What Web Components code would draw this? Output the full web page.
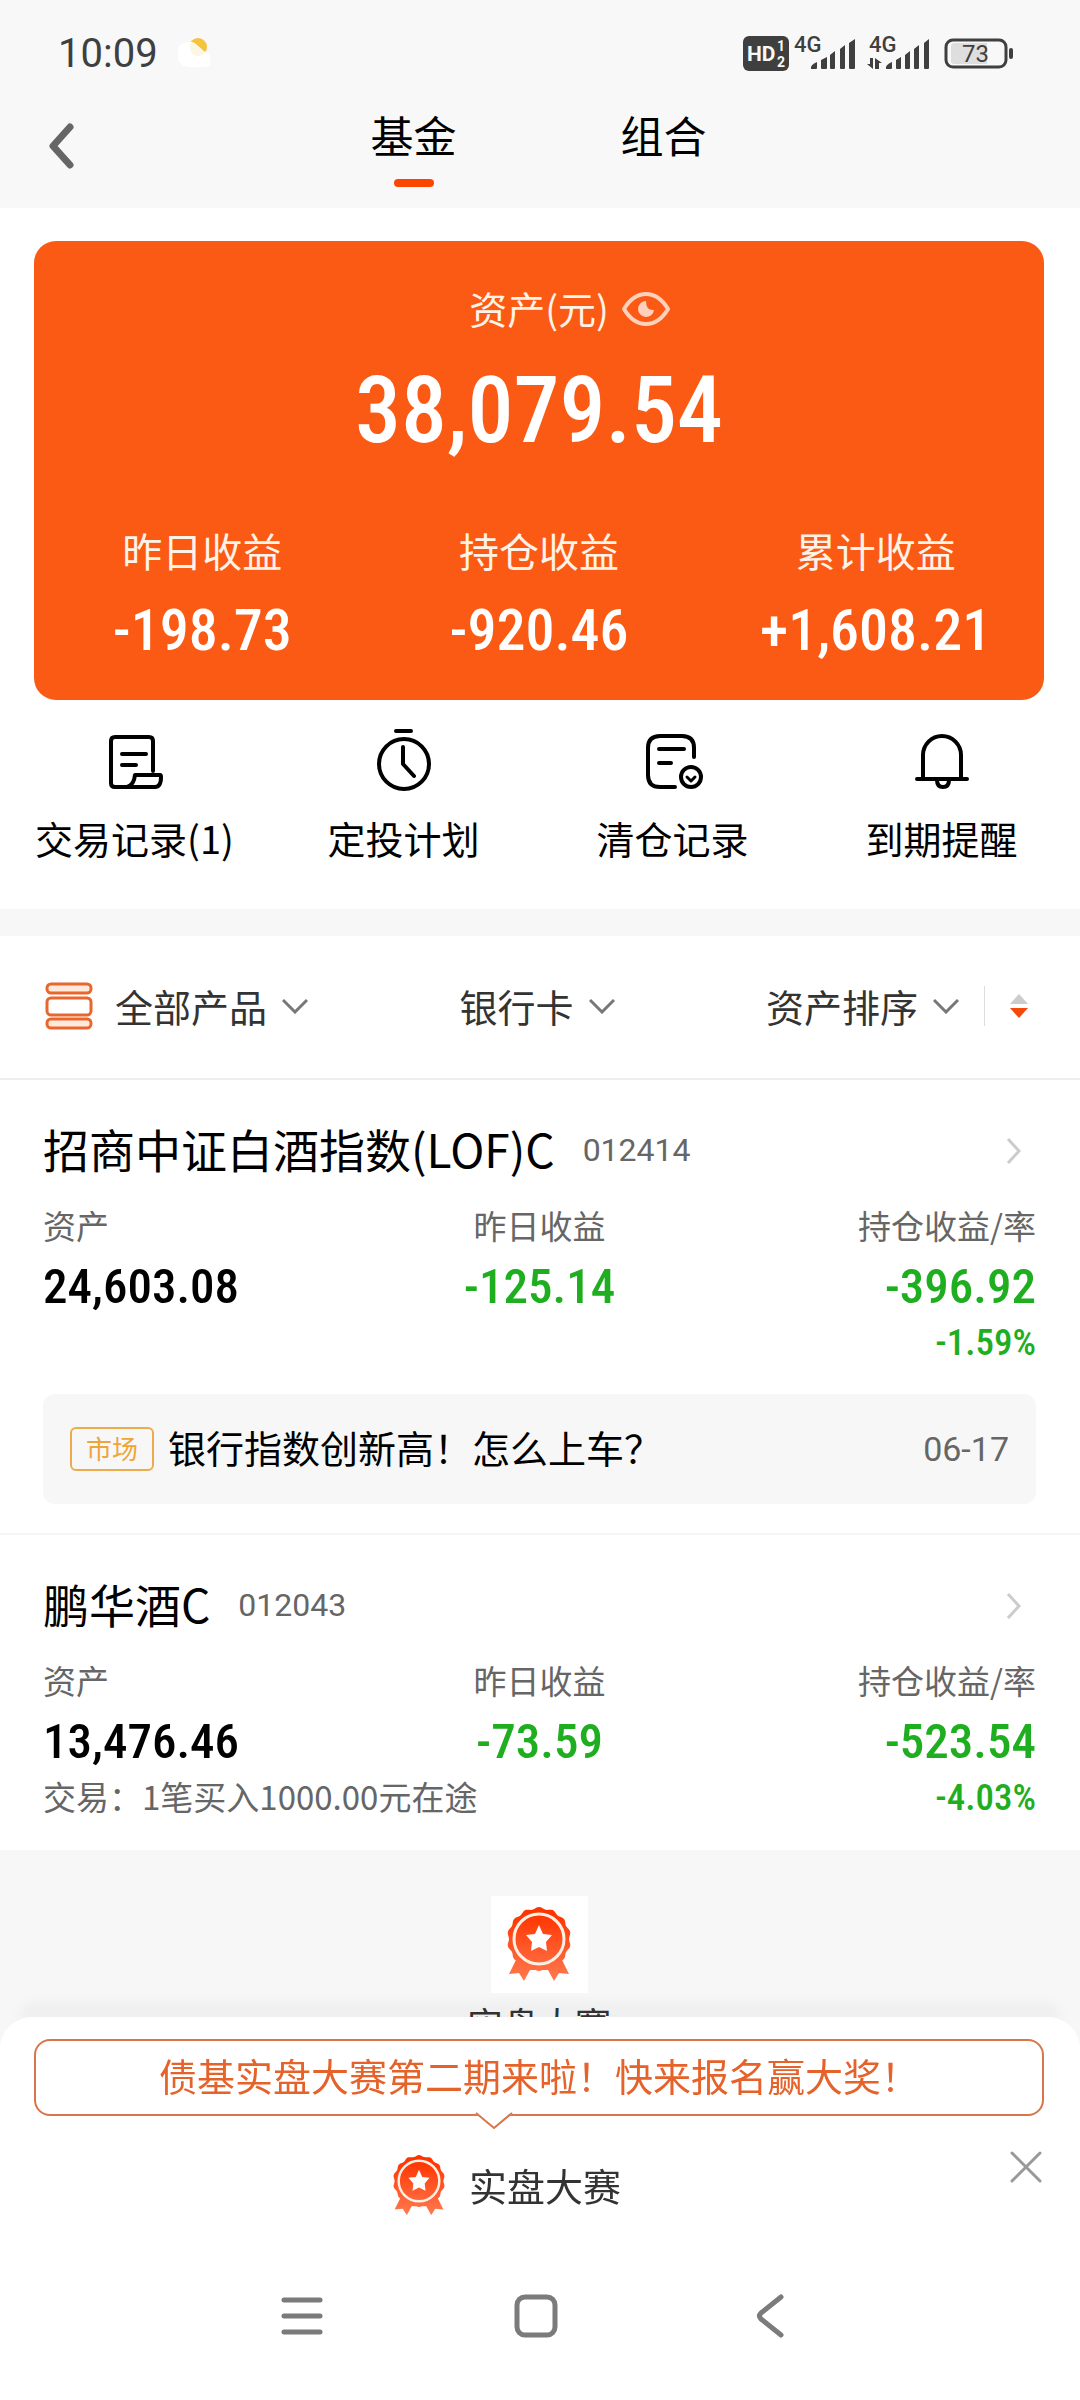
<!DOCTYPE html>
<html lang="zh-CN">
<head>
<meta charset="utf-8">
<meta name="viewport" content="width=device-width, initial-scale=1">
<title>基金</title>
<style>
  :root {
    --orange: #fb5a15;
    --red: #fb4602;
    --green: #1fae1f;
    --muted: #666;
    --page: #f7f7f7;
    --num: "Roboto Condensed", "Liberation Sans Narrow", Roboto, sans-serif;
  }
  body {
    margin: 0;
    min-height: 100vh;
    background: var(--page);
    color: #000;
    font-family: "Noto Sans CJK SC", sans-serif;
  }
</style>
</head>
<body>
<fund-page></fund-page>

<script>
  class StatusBar extends HTMLElement {
    constructor() {
      super();
      this.attachShadow({ mode: 'open' });
      this.shadowRoot.innerHTML = `
        <style>
          :host {
            display: flex;
            align-items: center;
            justify-content: space-between;
            height: 106px;
            padding: 0 66px 0 58px;
            color: #3f3f3f;
            font-family: Roboto, sans-serif;
          }
          div { display: flex; align-items: center; }
          .left { gap: 20px; }
          time { font-size: 40px; line-height: 48px; padding-top: 2px; }
          .right { gap: 5px; }
          .second { margin-left: 5px; }
          .battery { margin-left: 9px; }
          svg { display: block; }
          text { font-family: Roboto, sans-serif; }
        </style>
        <div class="left">
          <time>10:09</time>
          <svg width="32" height="30" viewBox="0 0 32 30">
            <circle cx="20" cy="9" r="9" fill="#f7c23c"/>
            <path d="M10 4a10 10 0 0 1 9 3l9 8a7 7 0 0 1-4 14H12A12 12 0 0 1 10 4z" fill="#fff"/>
            <path d="M12 5q4 0 7 3l8 7q-5 5-11 2-5-4-4-12z" fill="#fdf6e2"/>
          </svg>
        </div>
        <div class="right">
          <svg width="46" height="35" viewBox="0 0 46 35">
            <rect width="46" height="35" rx="6" fill="#3f3f3f"/>
            <text x="4" y="25" font-size="21" font-weight="700" fill="#f8f8f8">HD</text>
            <text x="34" y="15" font-size="14" font-weight="700" fill="#f8f8f8">1</text>
            <text x="34" y="31" font-size="14" font-weight="700" fill="#f8f8f8">2</text>
          </svg>
          <svg width="62" height="45" viewBox="0 -5 62 45" fill="#3f3f3f">
            <text x="0" y="16" font-size="22" font-weight="500">4G</text>
            <path d="M17 33q-1-4 6-7v6q0 1-1 1zM27 24l6-3v11q0 1-1 1h-4q-1 0-1-1zM36 19l5-4v17q0 1-1 1h-3q-1 0-1-1zM46 13l5-4v23q0 1-1 1h-3q-1 0-1-1zM55 7l6-4v29q0 1-1 1h-4q-1 0-1-1z"/>
          </svg>
          <svg class="second" width="64" height="45" viewBox="0 -5 64 45" fill="#3f3f3f">
            <text x="3" y="16" font-size="22" font-weight="500">4G</text>
            <path d="M20 33q-1-4 6-7v6q0 1-1 1zM30 24l5-3v11q0 1-1 1h-3q-1 0-1-1zM39 19l5-4v17q0 1-1 1h-3q-1 0-1-1zM48 13l5-4v23q0 1-1 1h-3q-1 0-1-1zM58 7l5-4v29q0 1-1 1h-3q-1 0-1-1z"/>
            <path d="M4 22h3v11l-6-5h3zM9 33V22l7 5h-3v6z"/>
          </svg>
          <svg class="battery" width="70" height="31" viewBox="0 0 70 31">
            <rect x="2" y="2" width="60" height="27" rx="7" fill="none" stroke="#3f3f3f" stroke-width="3"/>
            <path d="M10 5h33v21H10q-3 0-3-3V8q0-3 3-3z" fill="#dedede"/>
            <rect x="65" y="10" width="4" height="11" rx="2" fill="#3f3f3f"/>
            <text x="18" y="24" font-size="24" fill="#3f3f3f">73</text>
          </svg>
        </div>
      `;
    }
  }

  class PageHeader extends HTMLElement {
    constructor() {
      super();
      this.attachShadow({ mode: 'open' });
      this.shadowRoot.innerHTML = `
        <style>
          :host {
            display: grid;
            grid-template-columns: 1fr auto 1fr;
            align-items: start;
          }
          button {
            padding: 0;
            border: 0;
            background: none;
            color: inherit;
            font: inherit;
          }
          .back {
            display: flex;
            align-items: center;
            width: 100px;
            height: 80px;
            padding-left: 48px;
          }
          nav { display: grid; grid-template-columns: 250px 250px; padding-right: 3px; }
          .tab { font-size: 43px; line-height: 56px; padding-bottom: 21px; }
          .tab::after {
            content: "";
            display: block;
            width: 40px;
            height: 8px;
            margin: 17px auto 0;
            border-radius: 4px;
          }
          .tab[aria-current]::after { background: var(--red); }
        </style>
        <button class="back" aria-label="返回">
          <svg width="28" height="46" viewBox="0 0 28 46" fill="none" stroke="#666" stroke-width="7" stroke-linecap="round" stroke-linejoin="round">
            <path d="M22 4L5 23l17 19"/>
          </svg>
        </button>
        <nav>
          <button class="tab" aria-current="page">基金</button>
          <button class="tab">组合</button>
        </nav>
      `;
    }
  }

  class StatItem extends HTMLElement {
    constructor() {
      super();
      this.attachShadow({ mode: 'open' });
      this.shadowRoot.innerHTML = `
        <style>
          :host { display: block; text-align: center; }
          .label { font-size: 40px; line-height: 48px; color: #fff2e6; }
          .value {
            margin-top: 26px;
            font: 500 58px/60px var(--num);
          }
        </style>
        <div class="label"><slot name="label"></slot></div>
        <div class="value"><slot></slot></div>
      `;
    }
  }

  class AssetCard extends HTMLElement {
    constructor() {
      super();
      this.attachShadow({ mode: 'open' });
      this.shadowRoot.innerHTML = `
        <style>
          :host {
            display: block;
            padding: 41px 0 40px;
            border-radius: 22px;
            background: var(--orange);
            color: #fff;
          }
          .title {
            display: grid;
            grid-template-columns: 1fr auto 1fr;
            align-items: center;
            column-gap: 13px;
            font-size: 38px;
            line-height: 52px;
            color: #fff2e6;
          }
          .title span { grid-column: 2; }
          button {
            justify-self: start;
            padding: 2px 0 0;
            border: 0;
            background: none;
          }
          svg { display: block; }
          .total {
            margin-top: 29px;
            text-align: center;
            font: 500 92px/96px var(--num);
          }
          .stats {
            display: grid;
            grid-template-columns: repeat(3, 1fr);
            margin-top: 67px;
          }
        </style>
        <div class="title">
          <span>资产(元)</span>
          <button aria-label="隐藏金额">
            <svg width="48" height="36" viewBox="0 0 48 36">
              <path d="M2 18C8 8 15 3 24 3s16 5 22 15c-6 10-13 15-22 15S8 28 2 18z" fill="none" stroke="#ffd0bb" stroke-width="4" stroke-linejoin="round"/>
              <path d="M24 10a8 8 0 1 0 8 9q-8 1-8-9z" fill="#ffd0bb"/>
            </svg>
          </button>
        </div>
        <div class="total">38,079.54</div>
        <div class="stats">
          <stat-item><span slot="label">昨日收益</span>-198.73</stat-item>
          <stat-item><span slot="label">持仓收益</span>-920.46</stat-item>
          <stat-item><span slot="label">累计收益</span>+1,608.21</stat-item>
        </div>
      `;
    }
  }

  const ACTION_ICONS = {
    records: `
      <path d="M50 43V13q0-4-4-4H12q-4 0-4 4v42q0 4 4 4h40q6 0 6-10 0-2-1-2H32q-1 10-8 12"/>
      <path d="M19 26h24M19 37h14"/>`,
    plan: `
      <circle cx="32" cy="36" r="25"/>
      <path d="M24 3h15M31 19v17l11 12"/>`,
    cleared: `
      <path d="M53 29V20Q53 8 41 8H19Q7 8 7 20v27q0 12 12 12h15"/>
      <path d="M18 21h25M18 35h12"/>
      <circle cx="50" cy="49" r="10"/>
      <path d="M46 49l4 4 4-4" stroke-width="3"/>`,
    remind: `
      <path d="M13 50V27a19 19 0 0 1 38 0v23M7 51h50"/>
      <path d="M27 52q0 7 6 7t6-7"/>`
  };

  class ActionItem extends HTMLElement {
    constructor() {
      super();
      this.attachShadow({ mode: 'open' });
      this.shadowRoot.innerHTML = `
        <style>
          :host { display: block; }
          a {
            display: flex;
            flex-direction: column;
            align-items: center;
            gap: 22px;
            color: #000;
            font-size: 38px;
            line-height: 48px;
            text-decoration: none;
            white-space: nowrap;
          }
        </style>
        <a href="#">
          <svg width="64" height="64" viewBox="0 0 64 64" fill="none" stroke="#000" stroke-width="4" stroke-linecap="round" stroke-linejoin="round"></svg>
          <slot></slot>
        </a>
      `;
    }

    connectedCallback() {
      this.shadowRoot.querySelector('svg').innerHTML = ACTION_ICONS[this.getAttribute('icon')];
    }
  }

  class FilterSelect extends HTMLElement {
    constructor() {
      super();
      this.attachShadow({ mode: 'open' });
      this.shadowRoot.innerHTML = `
        <style>
          :host { display: block; }
          label { display: flex; align-items: center; gap: 14px; }
          select {
            appearance: none;
            margin: 0;
            padding: 0;
            border: 0;
            background: none;
            color: #333;
            font: inherit;
            font-size: 38px;
            line-height: 52px;
          }
          svg { display: block; }
        </style>
        <label>
          <select></select>
          <svg width="26" height="16" viewBox="0 0 26 16" fill="none" stroke="#777" stroke-width="3">
            <path d="M1 2l12 12L25 2"/>
          </svg>
        </label>
      `;
    }

    connectedCallback() {
      const select = this.shadowRoot.querySelector('select');
      select.setAttribute('aria-label', this.getAttribute('label'));
      select.add(new Option(this.getAttribute('label')));
    }
  }

  class FilterBar extends HTMLElement {
    constructor() {
      super();
      this.attachShadow({ mode: 'open' });
      this.shadowRoot.innerHTML = `
        <style>
          :host {
            display: flex;
            align-items: center;
            justify-content: space-between;
            height: 140px;
            padding: 0 52px 2px 45px;
            border-bottom: 2px solid #eee;
            background: #fff;
          }
          div { display: flex; align-items: center; }
          .products { gap: 22px; }
          .line { width: 1px; height: 40px; margin: 0 25px; background: #ddd; }
          button { padding: 0; border: 0; background: none; }
          svg { display: block; }
        </style>
        <div class="products">
          <svg width="48" height="48" viewBox="0 0 48 48" fill="#ffe9dc" stroke="#e8672f" stroke-width="3">
            <rect x="2" y="2" width="44" height="9" rx="4"/>
            <rect x="2" y="16" width="44" height="17" rx="4" fill="#fff"/>
            <rect x="2" y="37" width="44" height="9" rx="4"/>
          </svg>
          <filter-select label="全部产品"></filter-select>
        </div>
        <filter-select label="银行卡"></filter-select>
        <div>
          <filter-select label="资产排序"></filter-select>
          <span class="line"></span>
          <button aria-label="降序">
            <svg width="18" height="24" viewBox="0 0 18 24">
              <path d="M9 0l9 10H0z" fill="#ccc"/>
              <path d="M0 14h18l-9 10z" fill="#f5490a"/>
            </svg>
          </button>
        </div>
      `;
    }
  }

  class FundItem extends HTMLElement {
    constructor() {
      super();
      this.attachShadow({ mode: 'open' });
      this.shadowRoot.innerHTML = `
        <style>
          :host {
            display: block;
            padding: 40px 44px 29px 43px;
            background: #fff;
          }
          a {
            display: flex;
            align-items: center;
            color: #000;
            text-decoration: none;
          }
          h2 {
            align-self: flex-start;
            margin: 0;
            font-size: 46px;
            font-weight: 400;
            line-height: 56px;
          }
          .code {
            flex: 1;
            margin-left: 28px;
            color: var(--muted);
            font: 32px/61px Roboto, sans-serif;
          }
          svg { margin-right: 14px; }
          dl {
            display: grid;
            grid-template-columns: 1fr auto 1fr;
            margin: 24px 0 0;
          }
          dl div:nth-child(2) { text-align: center; }
          dl div:nth-child(3) { text-align: right; }
          dt { color: var(--muted); font-size: 33px; line-height: 40px; }
          dd { margin: 18px 0 0; font: 500 49px/48px var(--num); }
          .change { color: var(--green); }
          .foot {
            display: flex;
            justify-content: space-between;
            margin-top: 11px;
            color: var(--muted);
            font-size: 33px;
            line-height: 39px;
          }
          .rate { margin-left: auto; color: var(--green); font: 500 37px/41px var(--num); }
        </style>
        <a href="#">
          <h2></h2>
          <span class="code"></span>
          <svg width="16" height="26" viewBox="0 0 16 26" fill="none" stroke="#ccc" stroke-width="3">
            <path d="M2 1l11 12L2 25"/>
          </svg>
        </a>
        <dl>
          <div><dt>资产</dt><dd class="asset"></dd></div>
          <div><dt>昨日收益</dt><dd class="day change"></dd></div>
          <div><dt>持仓收益/率</dt><dd class="hold change"></dd></div>
        </dl>
        <div class="foot"><slot name="note"></slot><span class="rate"></span></div>
        <slot></slot>
      `;
    }

    connectedCallback() {
      this.shadowRoot.querySelector('h2').textContent = this.getAttribute('name');
      ['code', 'asset', 'day', 'hold', 'rate'].forEach(key => {
        this.shadowRoot.querySelector('.' + key).textContent = this.getAttribute(key);
      });
    }
  }

  class NewsStrip extends HTMLElement {
    constructor() {
      super();
      this.attachShadow({ mode: 'open' });
      this.shadowRoot.innerHTML = `
        <style>
          :host { display: block; margin-top: 31px; }
          a {
            display: flex;
            align-items: center;
            height: 110px;
            padding: 0 27px;
            border-radius: 12px;
            background: #f7f7f7;
            color: #000;
            font-size: 38px;
            text-decoration: none;
          }
          .tag {
            margin-right: 14px;
            padding: 0 14px 2px;
            border: 2px solid #ecab4c;
            border-radius: 6px;
            color: #eda63a;
            font-size: 26px;
            line-height: 38px;
          }
          .text { padding-bottom: 6px; }
          time {
            margin-left: auto;
            color: var(--muted);
            font: 34px/40px Roboto, sans-serif;
          }
        </style>
        <a href="#">
          <span class="tag"><slot name="tag"></slot></span>
          <span class="text"><slot></slot></span>
          <time><slot name="date"></slot></time>
        </a>
      `;
    }
  }

  class MedalIcon extends HTMLElement {
    constructor() {
      super();
      this.attachShadow({ mode: 'open' });
      this.shadowRoot.innerHTML = `
        <style>
          :host { display: block; width: 64px; }
          svg { display: block; width: 100%; }
        </style>
        <svg viewBox="0 0 64 74">
          <defs>
            <linearGradient id="fill" gradientUnits="userSpaceOnUse" x1="0" y1="0" x2="0" y2="74">
              <stop offset="0.1" stop-color="#ff3500"/>
              <stop offset="1" stop-color="#ff7a50"/>
            </linearGradient>
          </defs>
          <path fill="url(#fill)" d="M10 51L2 67l10-1 5 8 6-11h18l6 11 5-8 10 1-8-16z"/>
          <path fill="url(#fill)" d="${this.scallop(32, 32, 31, 1, 14)}"/>
          <circle cx="32" cy="32" r="25" fill="none" stroke="#fff0e6" stroke-width="3"/>
          <path fill="#fff" d="M32 18l4 9 9 1-6 7 1 9-8-4-8 4 1-9-6-7 9-1z"/>
        </svg>
      `;
    }

    // wavy circle: radius r with n bumps of height a
    scallop(cx, cy, r, a, n) {
      const points = [];
      for (let deg = 0; deg < 360; deg += 3) {
        const t = deg * Math.PI / 180;
        const d = r + a * Math.cos(n * (t + Math.PI / 2));
        points.push((cx + d * Math.cos(t)).toFixed(1) + ' ' + (cy + d * Math.sin(t)).toFixed(1));
      }
      return 'M' + points.join('L') + 'z';
    }
  }

  class ContestTile extends HTMLElement {
    constructor() {
      super();
      this.attachShadow({ mode: 'open' });
      this.shadowRoot.innerHTML = `
        <style>
          :host { display: block; padding: 46px 2px 360px 0; }
          a {
            display: flex;
            flex-direction: column;
            align-items: center;
            color: #333;
            font-size: 36px;
            line-height: 44px;
            text-decoration: none;
          }
          .box {
            box-sizing: border-box;
            width: 97px;
            height: 97px;
            margin-bottom: 8px;
            padding: 11px 16px;
            background: #fff;
          }
        </style>
        <a href="#"><span class="box"><medal-icon></medal-icon></span><slot></slot></a>
      `;
    }
  }

  class PromoSheet extends HTMLElement {
    constructor() {
      super();
      this.attachShadow({ mode: 'open' });
      this.shadowRoot.innerHTML = `
        <style>
          :host {
            display: block;
            position: fixed;
            right: 0;
            bottom: 0;
            left: 0;
            padding-top: 22px;
            border-radius: 32px 32px 0 0;
            background: #fff;
            box-shadow: 0 -36px 12px -20px rgba(0, 0, 0, 0.03);
          }
          .bubble {
            position: relative;
            margin: 0 36px 0 34px;
            padding-bottom: 5px;
            border: 2px solid #d9754a;
            border-radius: 16px;
            color: #e5622a;
            font-size: 38px;
            line-height: 68px;
            text-align: center;
          }
          .bubble svg {
            position: absolute;
            top: 100%;
            left: calc(50% - 64px);
            margin-top: -2px;
          }
          .row {
            display: flex;
            align-items: flex-start;
            height: 136px;
            padding: 0 34px;
          }
          a {
            flex: 1;
            display: flex;
            align-items: center;
            justify-content: center;
            gap: 24px;
            padding: 39px 26px 0 0;
            color: #333;
            font-size: 38px;
            line-height: 60px;
            text-decoration: none;
          }
          medal-icon { width: 52px; }
          button {
            margin-top: 31px;
            padding: 4px;
            border: 0;
            background: none;
          }
          button svg { display: block; }
        </style>
        <div class="bubble">
          <slot name="message"></slot>
          <svg width="38" height="18" viewBox="0 0 38 18">
            <path d="M1 0h36v2L19 16 1 2z" fill="#fff"/>
            <path d="M1 1l18 15L37 1" fill="none" stroke="#d9754a" stroke-width="2"/>
          </svg>
        </div>
        <div class="row">
          <a href="#"><medal-icon></medal-icon><slot></slot></a>
          <button aria-label="关闭">
            <svg width="32" height="32" viewBox="0 0 32 32" stroke="#999" stroke-width="3" stroke-linecap="round">
              <path d="M2 2l28 28M30 2L2 30"/>
            </svg>
          </button>
        </div>
        <system-nav></system-nav>
      `;
    }
  }

  class SystemNav extends HTMLElement {
    constructor() {
      super();
      this.attachShadow({ mode: 'open' });
      this.shadowRoot.innerHTML = `
        <style>
          :host {
            display: grid;
            grid-template-columns: repeat(3, 234px);
            justify-content: center;
            height: 148px;
            padding-right: 8px;
          }
          button {
            display: flex;
            align-items: center;
            justify-content: center;
            height: 128px;
            padding: 0;
            border: 0;
            background: none;
          }
          svg { fill: none; stroke: #7b7b7b; stroke-width: 5; stroke-linecap: round; stroke-linejoin: round; }
        </style>
        <button aria-label="最近任务"><svg width="44" height="44" viewBox="0 0 44 44"><path d="M4 6h36M4 22h36M4 38h36"/></svg></button>
        <button aria-label="主屏幕"><svg width="44" height="44" viewBox="0 0 44 44"><rect x="3" y="3" width="38" height="38" rx="8"/></svg></button>
        <button aria-label="返回"><svg width="28" height="44" viewBox="0 0 28 44"><path d="M25 3L5 19q-3 3 0 6l20 16"/></svg></button>
      `;
    }
  }

  class FundPage extends HTMLElement {
    constructor() {
      super();
      this.attachShadow({ mode: 'open' });
      this.shadowRoot.innerHTML = `
        <style>
          :host { display: block; }
          header { background: #f8f8f8; }
          .overview { padding: 33px 36px 47px 34px; background: #fff; }
          .actions {
            display: grid;
            grid-template-columns: repeat(4, 1fr);
            margin: 28px -32px 0 -34px;
          }
          .list { margin-top: 27px; padding-bottom: 3px; background: #fff; }
          fund-item + fund-item { border-top: 2px solid #f5f5f5; }
        </style>
        <header>
          <status-bar></status-bar>
          <page-header></page-header>
        </header>
        <section class="overview">
          <asset-card></asset-card>
          <div class="actions">
            <action-item icon="records">交易记录(1)</action-item>
            <action-item icon="plan">定投计划</action-item>
            <action-item icon="cleared">清仓记录</action-item>
            <action-item icon="remind">到期提醒</action-item>
          </div>
        </section>
        <section class="list">
          <filter-bar></filter-bar>
          <fund-item name="招商中证白酒指数(LOF)C" code="012414" asset="24,603.08" day="-125.14" hold="-396.92" rate="-1.59%">
            <news-strip>
              <span slot="tag">市场</span>银行指数创新高！怎么上车？<span slot="date">06-17</span>
            </news-strip>
          </fund-item>
          <fund-item name="鹏华酒C" code="012043" asset="13,476.46" day="-73.59" hold="-523.54" rate="-4.03%">
            <span slot="note">交易：1笔买入1000.00元在途</span>
          </fund-item>
        </section>
        <contest-tile>实盘大赛</contest-tile>
        <promo-sheet>
          <span slot="message">债基实盘大赛第二期来啦！快来报名赢大奖！</span>
          实盘大赛
        </promo-sheet>
      `;
    }
  }

  customElements.define('status-bar', StatusBar);
  customElements.define('page-header', PageHeader);
  customElements.define('stat-item', StatItem);
  customElements.define('asset-card', AssetCard);
  customElements.define('action-item', ActionItem);
  customElements.define('filter-select', FilterSelect);
  customElements.define('filter-bar', FilterBar);
  customElements.define('fund-item', FundItem);
  customElements.define('news-strip', NewsStrip);
  customElements.define('medal-icon', MedalIcon);
  customElements.define('contest-tile', ContestTile);
  customElements.define('system-nav', SystemNav);
  customElements.define('promo-sheet', PromoSheet);
  customElements.define('fund-page', FundPage);
</script>
</body>
</html>
